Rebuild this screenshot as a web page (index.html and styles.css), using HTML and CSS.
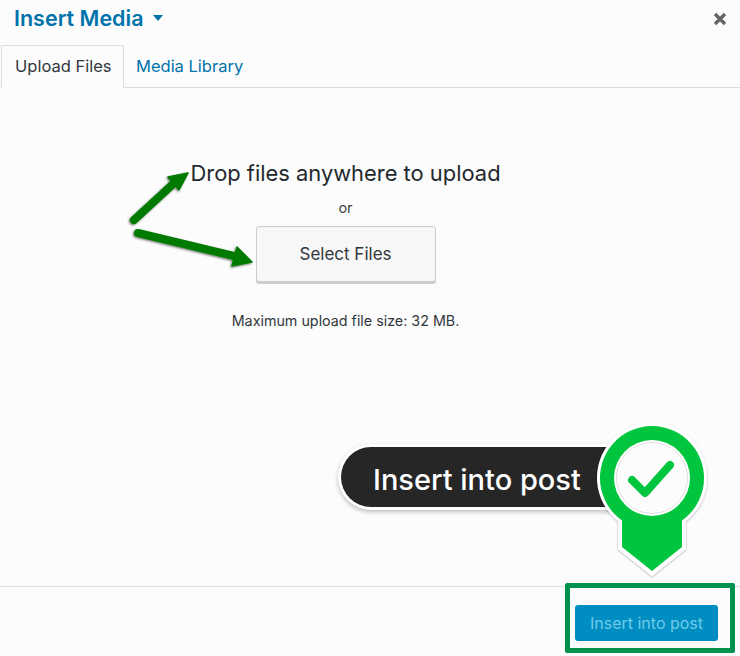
FILE: index.html
```html
<!DOCTYPE html>
<html lang="en">
<head>
<meta charset="utf-8">
<title>Insert Media</title>
<link rel="stylesheet" href="styles.css">
</head>
<body>
<div class="modal">
  <header class="title-row">
    <h1 class="title">Insert Media</h1>
    <span class="caret"></span>
    <svg class="close" viewBox="0 0 14 14" width="14" height="14"><path d="M2 2l10 10M12 2L2 12" stroke="#666" stroke-width="3.4" fill="none"/></svg>
  </header>
  <nav class="tabs">
    <a class="tab active">Upload Files</a>
    <a class="tab">Media Library</a>
  </nav>
  <main class="upload">
    <h2 class="drop">Drop files anywhere to upload</h2>
    <p class="or">or</p>
    <button class="select">Select Files</button>
    <p class="max">Maximum upload file size: 32 MB.</p>
  </main>
  <footer class="toolbar">
    <button class="insert">Insert into post</button>
  </footer>
</div>
<svg class="marks" width="740" height="656" viewBox="0 0 740 656">
  <defs>
    <filter id="sh" x="-20%" y="-20%" width="140%" height="140%"><feDropShadow dx="-1" dy="1" stdDeviation="1.2" flood-color="#000" flood-opacity=".55"/></filter>
    <filter id="ps" x="-10%" y="-10%" width="120%" height="120%"><feDropShadow dx="0" dy="1" stdDeviation="1" flood-color="#000" flood-opacity=".3"/></filter>
  </defs>
  <g filter="url(#sh)" fill="#067a06" stroke="#067a06">
    <path d="M134 220L172 185" stroke-width="8" stroke-linecap="round" fill="none"/>
    <path d="M188 173L168 177L179 190Z" stroke-width="1.5" stroke-linejoin="round"/>
    <path d="M138 233L238 257" stroke-width="8" stroke-linecap="round" fill="none"/>
    <path d="M252 262L237 247L232 266Z" stroke-width="1.5" stroke-linejoin="round"/>
  </g>
</svg>
<div class="pill">Insert into post</div>
<svg class="pin" width="740" height="656" viewBox="0 0 740 656">
  <path filter="url(#ps)" d="M618 521A55 55 0 1 1 686 521V549L652 576L618 549Z" fill="#fff"/>
  <path d="M622 520.5A52 52 0 1 1 682 520.5V547L652 571L622 547Z" fill="#00c53e"/>
  <circle cx="652" cy="478" r="38" fill="#fff"/>
  <circle cx="652" cy="478" r="35.5" fill="none" stroke="#ddd" stroke-width="1"/>
  <circle cx="652" cy="478" r="34" fill="#fcfcfc"/>
  <path d="M632 480L645 493L670 465" fill="none" stroke="#00c53e" stroke-width="8" stroke-linecap="round" stroke-linejoin="round"/>
</svg>
<div class="highlight"></div>
</body>
</html>
```
FILE: styles.css
```css
html, body {
  margin: 0;
  padding: 0;
  height: 656px;
  overflow: hidden;
  background: #fcfcfc;
}
body {
  position: relative;
  font-family: Inter, "Liberation Sans", sans-serif;
}
.modal {
  display: flex;
  flex-direction: column;
  height: 656px;
}
.title-row {
  display: flex;
  align-items: center;
  height: 37px;
  padding: 0 13px 0 14px;
}
.title {
  margin: 0;
  font-size: 21.5px;
  font-weight: 600;
  color: #0073aa;
  line-height: 37px;
}
.caret {
  width: 0;
  height: 0;
  margin-left: 9px;
  margin-bottom: 1px;
  border-left: 5px solid transparent;
  border-right: 5px solid transparent;
  border-top: 6px solid #0073aa;
}
.close {
  margin-left: auto;
}
.tabs {
  display: flex;
  height: 50px;
  margin-top: 1px;
  padding: 7px 0 0 1px;
  box-sizing: border-box;
  border-bottom: 1px solid #ddd;
}
.tab {
  height: 43px;
  box-sizing: border-box;
  padding: 0 12px;
  line-height: 43px;
  font-size: 16.5px;
  color: #0073aa;
}
.tab.active {
  width: 123px;
  padding: 0 0 0 13px;
  color: #32373c;
  background: #fcfcfc;
  border: 1px solid #ddd;
  border-bottom: 1px solid #fcfcfc;
  line-height: 41px;
}
.upload {
  flex: 1;
  display: flex;
  flex-direction: column;
  align-items: center;
  padding-right: 49px;
}
.drop {
  margin: 71px 0 0 0;
  font-size: 21.9px;
  font-weight: 400;
  line-height: 28px;
  color: #23282d;
}
.or {
  margin: 12px 0 0;
  font-size: 14.5px;
  line-height: 17px;
  color: #444;
}
.select {
  width: 180px;
  height: 56px;
  margin-top: 10px;
  font-family: inherit;
  font-size: 17px;
  color: #32373c;
  background: #f7f7f7;
  border: 1px solid #ccc;
  border-radius: 3px;
  box-shadow: 0 2px 0 #ccc;
}
.max {
  margin: 30px 0 0;
  font-size: 14.3px;
  line-height: 18px;
  color: #32373c;
}
.toolbar {
  display: flex;
  justify-content: flex-end;
  height: 70px;
  box-sizing: border-box;
  padding: 18px 22px 0 0;
  border-top: 1px solid #ddd;
}
.insert {
  width: 143px;
  height: 36px;
  padding: 0;
  font-family: inherit;
  font-size: 16px;
  color: #6fcbe8;
  background: #008ec2;
  border: 0;
  border-radius: 3px;
}
.marks, .pin {
  position: absolute;
  left: 0;
  top: 0;
  pointer-events: none;
}
.pill {
  position: absolute;
  left: 341px;
  top: 447px;
  width: 300px;
  height: 60px;
  box-sizing: border-box;
  padding-left: 32px;
  font-size: 29px;
  font-weight: 500;
  line-height: 66px;
  color: #fff;
  background: #262626;
  border-radius: 30px;
  box-shadow: 0 0 0 3px #fff, 0 2px 4px 3px rgba(0, 0, 0, .25);
}
.highlight {
  position: absolute;
  left: 565px;
  top: 583px;
  width: 170px;
  height: 70px;
  box-sizing: border-box;
  border: 5px solid #00914f;
  border-radius: 2px;
}
```
